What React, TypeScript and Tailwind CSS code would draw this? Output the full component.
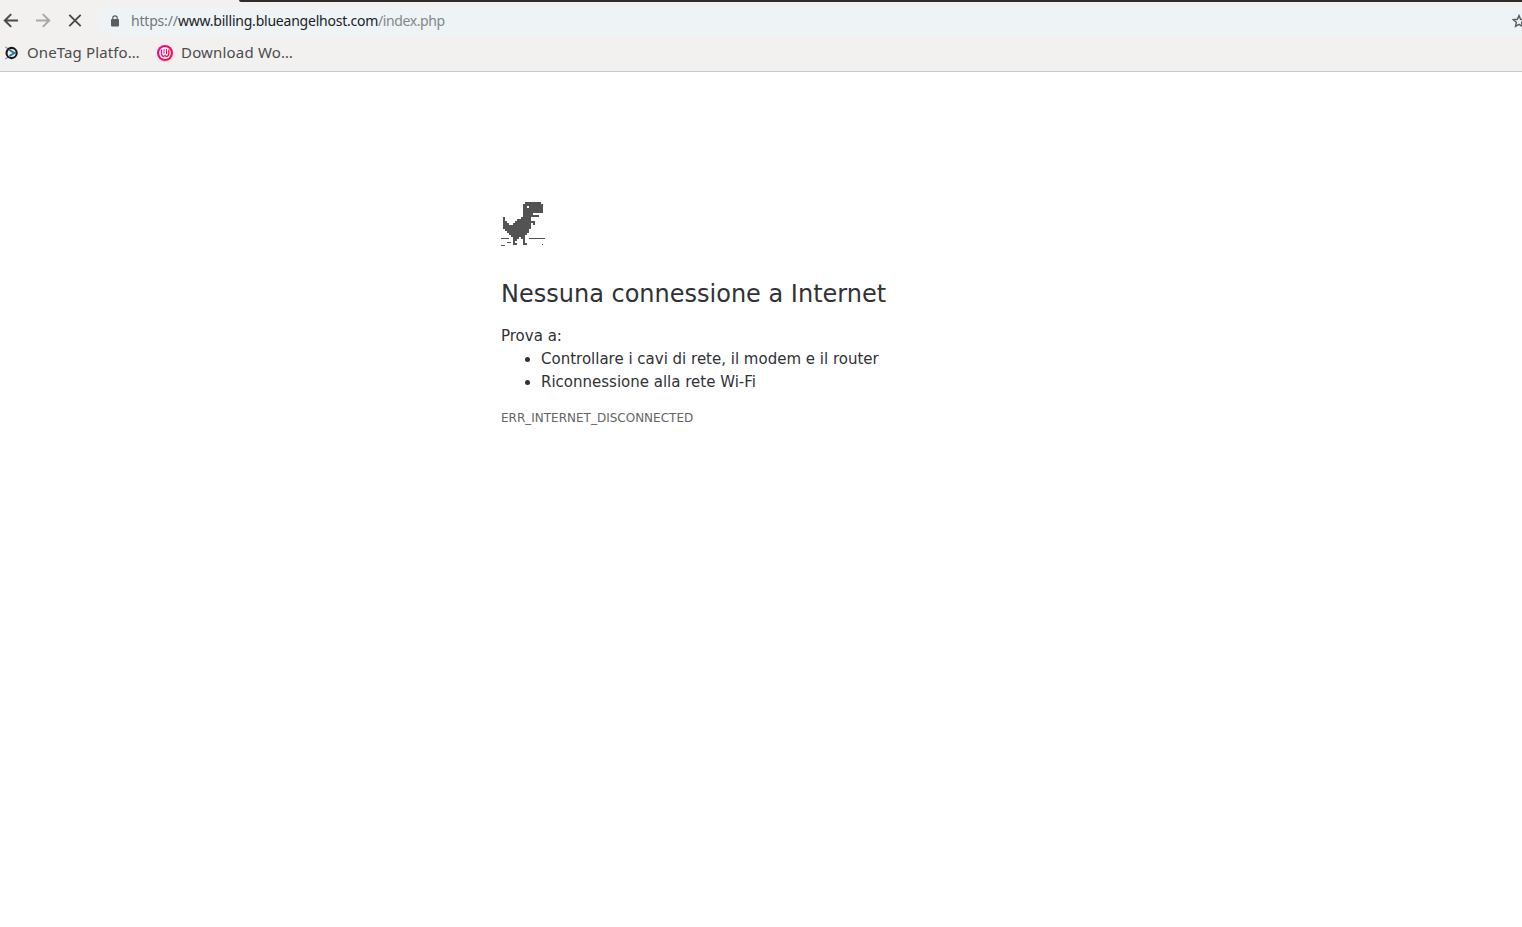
import type { ReactNode } from "react";

const DINO_ROWS = [
  "...........########.",
  "..........##########",
  "..........##.#######",
  "..........##########",
  "..........##########",
  "..........#####.....",
  "..........########..",
  "#........#####......",
  "#......#######......",
  "##....##########....",
  "###..#########.#....",
  "##############......",
  "##############......",
  ".############.......",
  "..###########.......",
  "...#########........",
  "....#######.........",
  ".....###.##.........",
  ".....##...#.........",
  ".....#....#.........",
  ".....##...##........",
];

// the head (rows 0-4) sits one pixel higher, its last row fills the gap
function Dino() {
  return (
    <svg width="44" height="44" viewBox="0 0 44 44" fill="#535353" shapeRendering="crispEdges">
      {DINO_ROWS.map((row, y) =>
        [...row].map((cell, x) =>
          cell === "#" ? (
            <rect
              key={`${x}-${y}`}
              x={2 + x * 2}
              y={y < 5 ? y * 2 : y * 2 + 1}
              width="2"
              height={y === 4 ? 3 : 2}
            />
          ) : null,
        ),
      )}
      <path d="M0 36h8v1H0zM28 36h16v1H28zM6 40h4v1H6zM0 43h4v1H0zM41 42h1v1h-1z" />
    </svg>
  );
}

function BackIcon() {
  return (
    <svg width="16" height="16" viewBox="0 0 16 16" fill="none" stroke="#4a4a4a" strokeWidth="2">
      <path d="M15 7.5H2M8.2 1.1 1.8 7.5l6.4 6.4" />
    </svg>
  );
}

function ForwardIcon() {
  return (
    <svg width="16" height="16" viewBox="0 0 16 16" fill="none" stroke="#a9a8a7" strokeWidth="2">
      <path d="M1 7.5h13M7.8 1.1l6.4 6.4-6.4 6.4" />
    </svg>
  );
}

function StopIcon() {
  return (
    <svg width="14" height="14" viewBox="0 0 14 14" fill="none" stroke="#4a4a4a" strokeWidth="1.9">
      <path d="m1.3.8 11.4 11.4M12.7.8 1.3 12.2" />
    </svg>
  );
}

function LockIcon() {
  return (
    <svg width="8" height="12" viewBox="0 0 8 12">
      <path d="M1.8 5V3a2.2 2.2 0 0 1 4.4 0v2" fill="none" stroke="#5a5d61" strokeWidth="1.2" />
      <rect y="4" width="8" height="7.4" rx="0.8" fill="#5a5d61" />
    </svg>
  );
}

function StarIcon() {
  return (
    <svg className="shrink-0" width="14" height="14" viewBox="0 0 14 14" fill="none" stroke="#5a5d61" strokeWidth="1.4">
      <path d="m7 1.5 1.6 3.8 4.1.4-3.1 2.7.9 4L7 10.3l-3.5 2.1.9-4-3.1-2.7 4.1-.4z" />
    </svg>
  );
}

function OneTagIcon() {
  return (
    <svg width="14" height="14" viewBox="0 0 14 14" fill="none">
      <path d="M.2 1 3 2.8M.2 13 3 11.2" stroke="#5ba5c4" strokeWidth="1.2" />
      <circle cx="6.6" cy="7" r="5.1" stroke="#17191c" strokeWidth="2.1" />
      <path d="m4.4 4 5 3-5 3" stroke="#23789c" strokeWidth="2" />
    </svg>
  );
}

function DownloadIcon() {
  return (
    <svg width="16" height="16" viewBox="0 0 16 16" fill="none">
      <defs>
        <linearGradient id="wo" x1="0" y1="0" x2="1" y2="1">
          <stop stopColor="#ff0096" />
          <stop offset="1" stopColor="#ff0a2d" />
        </linearGradient>
      </defs>
      <circle cx="8" cy="8" r="8" fill="url(#wo)" />
      <circle cx="8" cy="8" r="5.9" fill="#fff" />
      <path d="M4.5 4.5v4q0 2.8 2.1 2.8 1 0 1.5-.8.6.8 1.6.8 2.1 0 2.1-2.8v-4" stroke="url(#wo)" strokeWidth="1.3" />
      <path d="M7 4v4.8M9.5 4v4.8" stroke="url(#wo)" strokeWidth="1" />
    </svg>
  );
}

function Bookmark({ icon, children, className }: { icon: ReactNode; children: string; className: string }) {
  return (
    <a className={`flex items-center gap-2 whitespace-nowrap text-[15px] text-[#4c4c4c] ${className}`}>
      {icon}
      <span className="-mt-0.5">
        {children}
        <span className="tracking-[0.5px]">…</span>
      </span>
    </a>
  );
}

function BrowserBar() {
  return (
    <header className="h-[72px] border-b border-[#c9c9c9] bg-[#f2f1f0] font-['Noto_Sans',sans-serif]">
      <div className="flex h-[7px] justify-end">
        <div className="h-[2px] w-[1283px] rounded-bl-[3px] bg-[#2f2b29]" />
      </div>
      <div className="flex h-7 items-center pl-[3px]">
        <BackIcon />
        <div className="ml-4 flex">
          <ForwardIcon />
        </div>
        <div className="ml-[17px] flex">
          <StopIcon />
        </div>
        <div className="ml-[15px] flex h-7 grow items-center overflow-hidden rounded-l-full bg-[#eef3f5] pl-[14px]">
          <LockIcon />
          <p className="ml-3 flex grow whitespace-nowrap text-sm text-[#74777a]">
            <span className="w-[47px] tracking-[-0.2px]">https://</span>
            <span className="w-[200px] tracking-[-0.22px] text-[#202225]">www.billing.blueangelhost.com</span>
            <span className="tracking-[-0.4px] text-[#84878a]">/index.php</span>
          </p>
          <div className="-mr-1 flex">
            <StarIcon />
          </div>
        </div>
      </div>
      <nav className="flex h-9 items-center pl-[5px]">
        <Bookmark icon={<OneTagIcon />} className="w-[152px] tracking-[0.12px]">
          OneTag Platfo
        </Bookmark>
        <Bookmark icon={<DownloadIcon />} className="tracking-[0.18px]">
          Download Wo
        </Bookmark>
      </nav>
    </header>
  );
}

export default function App() {
  return (
    <div className="h-[927px] overflow-hidden bg-white">
      <BrowserBar />
      <main className="ml-[501px] w-[520px] pt-[130px] font-['DejaVu_Sans',sans-serif] text-[15px] leading-[23px] text-[#303236]">
        <Dino />
        <h1 className="mt-[34px] text-2xl leading-[29px]">Nessuna connessione a Internet</h1>
        <p className="mt-4">Prova a:</p>
        <ul className="list-disc pl-10">
          <li>Controllare i cavi di rete, il modem e il router</li>
          <li>Riconnessione alla rete Wi-Fi</li>
        </ul>
        <p className="mt-[13px] text-xs leading-[23px] text-[#646464]">ERR_INTERNET_DISCONNECTED</p>
      </main>
    </div>
  );
}
